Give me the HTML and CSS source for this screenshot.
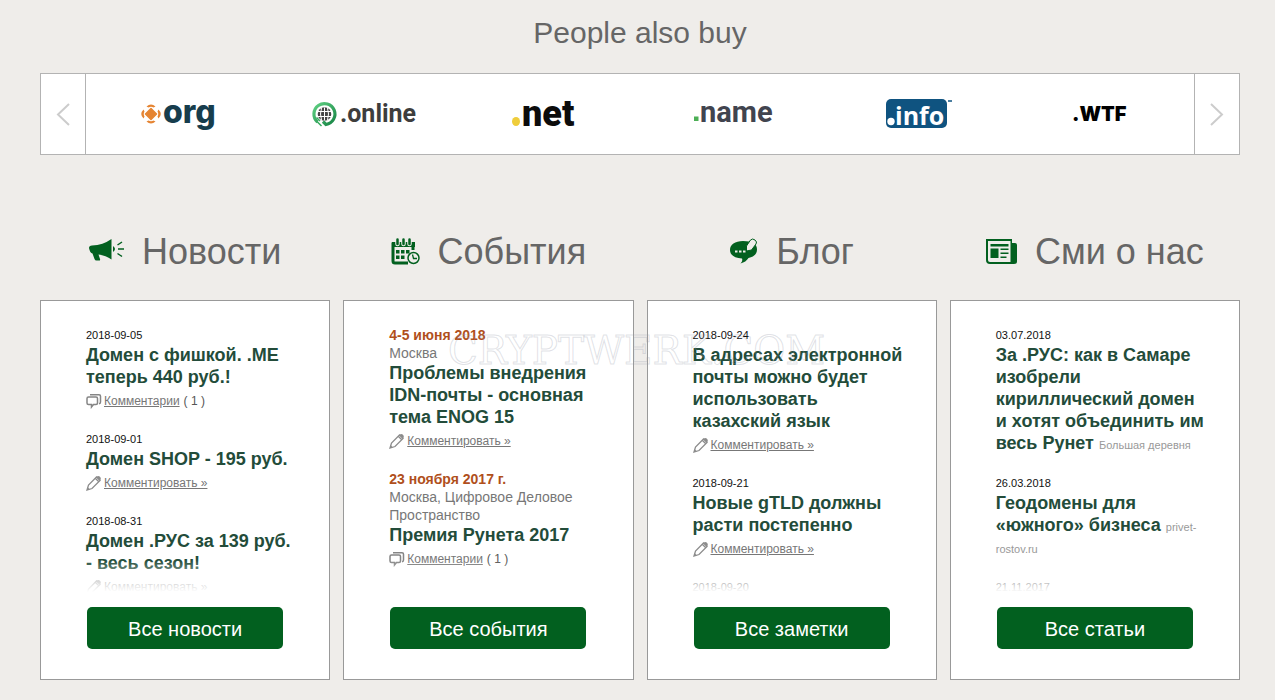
FILE: index.html
```html
<!DOCTYPE html>
<html lang="ru">
<head>
<meta charset="utf-8">
<title>People also buy</title>
<link rel="stylesheet" href="styles.css">
</head>
<body>
<svg class="sprite" aria-hidden="true">
  <symbol id="pencil" viewBox="0 0 16 16">
    <path d="M1 15 2.500 10 10.500 2 14 5.500 6 13.500Z M9.500 3.500 12.500 6.500" fill="none" stroke="#8c8c8c" stroke-width="1.300"/>
    <path d="M10.500 2Q12 .3 13.700 1.500 15.800 3.200 14 5.500ZM1 15l.8-2.700 2 2Z" fill="#8c8c8c"/>
  </symbol>
  <symbol id="bubbles" viewBox="0 0 16 16">
    <path d="M4 1.800H13q1.500 0 1.500 1.500V9q0 1.500-1.500 1.800" fill="none" stroke="#858585" stroke-width="1.500"/>
    <path d="M2.500 4H10q1.500 0 1.500 1.500V10q0 1.500-1.500 1.500H7.500L5.500 14V11.500H2.500Q1 11.500 1 10V5.500Q1 4 2.500 4Z" fill="#fff" stroke="#858585" stroke-width="1.500"/>
  </symbol>
</svg>

<main class="page">
  <section class="also-buy">
    <h2 class="also-buy-title">People also buy</h2>
    <div class="carousel">
      <button class="carousel-arrow" type="button" aria-label="Previous">
        <svg width="16" height="24" viewBox="0 0 16 24"><path d="M14 2 3 12.500 14 23" /></svg>
      </button>
      <div class="carousel-items">
        <a href="#" class="logo">
          <svg width="84" height="60" viewBox="0 -10 84 60">
            <g fill="#e58432">
              <path d="M11 13.500 16.500 19 11 24.500 5.500 19Z" stroke="#e58432" stroke-width="1.500" stroke-linejoin="round"/>
              <path d="M6.500 11.500Q11 7.500 15.500 11.500L13.500 12.500Q11 11 8.500 12.500ZM6.500 26.500Q11 30.500 15.500 26.500L13.500 25.500Q11 27 8.500 25.500ZM3.500 14.500Q-1 19 3.500 23.500L4.500 21.500Q3 19 4.500 16.500ZM18.500 14.500Q23 19 18.500 23.500L17.500 21.500Q19 19 17.500 16.500Z"/>
            </g>
            <text x="23" y="28" class="mark mark-org">org</text>
          </svg>
        </a>
        <a href="#" class="logo">
          <svg width="108" height="48" viewBox="0 -4 108 48">
            <defs><linearGradient id="ring" x1="0" y1="0" x2="1" y2="1"><stop offset="0" stop-color="#5fd183"/><stop offset="1" stop-color="#168344"/></linearGradient></defs>
            <path d="M5.500 27A10.500 10.500 0 1 1 14 29.500L11 26.500" fill="none" stroke="url(#ring)" stroke-width="3.200"/>
            <path d="M5 26.500 9.500 31M4.500 22.500 8 26" stroke="#36ab5f" stroke-width="1.500"/>
            <circle cx="12.500" cy="19" r="6.800" fill="#444"/>
            <path d="M6 16.500H19M6 21.500H19M12.500 12.500V25.500M9.500 13Q7.500 19 9.500 25M15.500 13Q17.500 19 15.500 25" fill="none" stroke="#fff" stroke-width="1"/>
            <text x="28" y="27" class="mark mark-online">.online</text>
          </svg>
        </a>
        <a href="#" class="logo logo-net">
          <svg width="68" height="60" viewBox="0 -10 68 60">
            <ellipse cx="5" cy="26.500" rx="4" ry="4.500" fill="#efcd3b"/>
            <text x="11" y="31" class="mark mark-net">net</text>
          </svg>
        </a>
        <a href="#" class="logo">
          <svg width="82" height="48" viewBox="0 -4 82 48">
            <path d="M1 21.500h4.500v4.500H1Z" fill="#4caf55"/>
            <text x="7" y="27" class="mark mark-name">name</text>
          </svg>
        </a>
        <a href="#" class="logo">
          <svg width="68" height="48" viewBox="0 -4 68 48">
            <rect x="2" y="4" width="61" height="29" rx="5" fill="#0f5380"/>
            <circle cx="7" cy="26.500" r="3.700" fill="#fff"/>
            <text x="11" y="30" class="mark mark-info">info</text>
            <path d="M64 6h4" stroke="#0f5380" stroke-width="1.500"/>
          </svg>
        </a>
        <a href="#" class="logo">
          <svg width="64" height="48" viewBox="0 -4 64 48">
            <text x="2" y="26" class="mark mark-wtf">.WTF</text>
          </svg>
        </a>
      </div>
      <button class="carousel-arrow" type="button" aria-label="Next">
        <svg width="16" height="24" viewBox="0 0 16 24"><path d="M2 2 13 12.500 2 23" /></svg>
      </button>
    </div>
  </section>

  <div class="columns">
    <section class="column">
      <h2 class="column-title">
        <svg width="36" height="28" viewBox="0 0 36 28">
          <path d="M0 10Q0 7.500 3 7.500 14 7 22.500 1V21.500Q17 17.500 9.500 16.500L11 21Q11.500 22.500 10 22.500H7.500Q6 22.500 5.500 21L3.500 15.500Q1 15 0 10ZM24 8Q28 11 24 14Z" fill="#02601f"/>
          <path d="M28.500 7 33 4M29 11H35M28.500 15.500 33 18.500" stroke="#02601f" stroke-width="1.500"/>
        </svg>
        Новости
      </h2>
      <div class="card">
        <div class="feed">
          <article class="entry">
            <time class="date">2018-09-05</time>
            <h3 class="headline">Домен с фишкой. .ME теперь 440 руб.!</h3>
            <p class="comments"><svg width="16" height="16"><use href="#bubbles"/></svg><a href="#">Комментарии</a> <span class="count">( 1 )</span></p>
          </article>
          <article class="entry">
            <time class="date">2018-09-01</time>
            <h3 class="headline">Домен SHOP - 195 руб.</h3>
            <p class="comments"><svg width="16" height="16"><use href="#pencil"/></svg><a href="#">Комментировать »</a></p>
          </article>
          <article class="entry">
            <time class="date">2018-08-31</time>
            <h3 class="headline">Домен .РУС за 139 руб. - весь сезон!</h3>
            <p class="comments"><svg width="16" height="16"><use href="#pencil"/></svg><a href="#">Комментировать »</a></p>
          </article>
        </div>
        <a href="#" class="more">Все новости</a>
      </div>
    </section>

    <section class="column">
      <h2 class="column-title">
        <svg width="30" height="28" viewBox="0 0 30 28">
          <path d="M2 4.500V23Q2 25 4 25H17M22 4.500V12" fill="none" stroke="#02601f" stroke-width="3"/>
          <path d="M1 4H24V9H1Z" fill="#02601f"/>
          <path d="M6.500 2V6M12.500 2V6M18.500 2V6" stroke="#efedea" stroke-width="4.500" stroke-linecap="round"/>
          <path d="M6.500 1.500V6M12.500 1.500V6M18.500 1.500V6" stroke="#02601f" stroke-width="2.500" stroke-linecap="round"/>
          <path d="M5 12h3.500v3.500H5ZM10 12h3.500v3.500H10ZM15 12h3.500v3.500H15ZM5 17.500h3.500V21H5ZM10 17.500h3.500V21H10Z" fill="#02601f"/>
          <circle cx="22.500" cy="20" r="5.500" fill="#efedea" stroke="#02601f" stroke-width="1.500"/>
          <path d="M21.500 16.500 22.500 20.500H26" fill="none" stroke="#02601f" stroke-width="1.300"/>
        </svg>
        События
      </h2>
      <div class="card">
        <div class="feed">
          <article class="entry">
            <time class="event-date">4-5 июня 2018</time>
            <p class="place">Москва</p>
            <h3 class="headline">Проблемы внедрения IDN-почты - основная тема ENOG 15</h3>
            <p class="comments"><svg width="16" height="16"><use href="#pencil"/></svg><a href="#">Комментировать »</a></p>
          </article>
          <article class="entry">
            <time class="event-date">23 ноября 2017 г.</time>
            <p class="place">Москва, Цифровое Деловое Пространство</p>
            <h3 class="headline">Премия Рунета 2017</h3>
            <p class="comments"><svg width="16" height="16"><use href="#bubbles"/></svg><a href="#">Комментарии</a> <span class="count">( 1 )</span></p>
          </article>
        </div>
        <a href="#" class="more">Все события</a>
      </div>
    </section>

    <section class="column">
      <h2 class="column-title">
        <svg width="30" height="28" viewBox="0 0 30 28">
          <path d="M14 3C6 3 1 6.500 1 12S6 20 13 20.500Q14 23 11.500 25.500 17 24 19.500 20 28 18 28 11.500 28 3 14 3Z" fill="#02601f"/>
          <path d="M17.500 13V8L21.500 2Q23.500 0 26 2T27 6L22.500 12Z" fill="#efedea" stroke="#02601f" stroke-width="1"/>
          <path d="M6 13.500h2.500M10 13.500h2.500M14 13.500h2.500" stroke="#efedea" stroke-width="2"/>
        </svg>
        Блог
      </h2>
      <div class="card">
        <div class="feed">
          <article class="entry">
            <time class="date">2018-09-24</time>
            <h3 class="headline">В адресах электронной почты можно будет использовать казахский язык</h3>
            <p class="comments"><svg width="16" height="16"><use href="#pencil"/></svg><a href="#">Комментировать »</a></p>
          </article>
          <article class="entry">
            <time class="date">2018-09-21</time>
            <h3 class="headline">Новые gTLD должны расти постепенно</h3>
            <p class="comments"><svg width="16" height="16"><use href="#pencil"/></svg><a href="#">Комментировать »</a></p>
          </article>
          <article class="entry">
            <time class="date">2018-09-20</time>
          </article>
        </div>
        <a href="#" class="more">Все заметки</a>
      </div>
    </section>

    <section class="column">
      <h2 class="column-title">
        <svg width="32" height="28" viewBox="0 0 32 28">
          <path d="M26 5H29Q31 5 31 7V23.500Q31 26 28 26H4Q0 26 0 22V1H26Z" fill="#02601f"/>
          <path d="M2 3H24.500V24H4Q2 24 2 22Z" fill="#efedea"/>
          <path d="M4.500 6H22.500V8.500H4.500ZM4.500 10.500H12.500V20H4.500ZM14.500 10.500h8v1.500h-8ZM14.500 14.500h8V16h-8ZM14.500 18.500h6V20h-6Z" fill="#02601f"/>
        </svg>
        Сми о нас
      </h2>
      <div class="card">
        <div class="feed">
          <article class="entry">
            <time class="date">03.07.2018</time>
            <h3 class="headline">За .РУС: как в Самаре изобрели кириллический домен и хотят объединить им весь Рунет <span class="source">Большая деревня</span></h3>
          </article>
          <article class="entry">
            <time class="date">26.03.2018</time>
            <h3 class="headline">Геодомены для «южного» бизнеса <span class="source">privet-rostov.ru</span></h3>
          </article>
          <article class="entry">
            <time class="date">21.11.2017</time>
          </article>
        </div>
        <a href="#" class="more">Все статьи</a>
      </div>
    </section>
    <div class="watermark">CRYPTWERK.COM</div>
  </div>
</main>
</body>
</html>
```

FILE: styles.css
```css
* {
  box-sizing: border-box;
}

body {
  margin: 0;
  background: #efedea;
  color: #222;
  font-family: "Liberation Sans", Arial, sans-serif;
}

h2, h3, p {
  margin: 0;
}

.sprite {
  display: none;
}

.page {
  padding: 13px 35px 20px 40px;
}

.also-buy-title {
  margin-bottom: 20px;
  color: #666;
  font-size: 30px;
  font-weight: 400;
  line-height: 40px;
  text-align: center;
}

.carousel {
  display: flex;
  height: 82px;
  border: 1px solid #b3b3b3;
  background: #fff;
}

.carousel-arrow {
  display: flex;
  flex: none;
  align-items: center;
  justify-content: center;
  width: 45px;
  padding: 0;
  border: 0;
  background: none;
}

.carousel-arrow:first-child {
  border-right: 1px solid #b3b3b3;
}

.carousel-arrow:last-child {
  border-left: 1px solid #b3b3b3;
}

.carousel-arrow path {
  fill: none;
  stroke: #ccc;
  stroke-width: 2;
}

.carousel-items {
  display: grid;
  flex: 1;
  grid-template-columns: repeat(6, 1fr);
  padding: 2px 0 0 4px;
}

.logo {
  display: flex;
  align-items: center;
  justify-content: center;
}

.logo-net {
  padding-right: 10px;
}

.mark {
  font-weight: 700;
}

.mark-org {
  fill: #173d4d;
  font-family: Inter, sans-serif;
  font-size: 32px;
  font-weight: 800;
}

.mark-online {
  fill: #3d3d3d;
  font-family: Roboto, sans-serif;
  font-size: 25px;
}

.mark-net {
  fill: #0c0c0c;
  font-family: Roboto, sans-serif;
  font-size: 36px;
  font-weight: 900;
}

.mark-name {
  fill: #41444f;
  font-family: Roboto, sans-serif;
  font-size: 29px;
}

.mark-info {
  fill: #fff;
  font-family: "Open Sans", sans-serif;
  font-size: 25px;
}

.mark-wtf {
  fill: #000;
  font-family: Inter, sans-serif;
  font-size: 20px;
  font-weight: 900;
}

.columns {
  position: relative;
  display: grid;
  grid-template-columns: repeat(4, 1fr);
  gap: 13px;
  margin-top: 73px;
}

.column-title {
  display: flex;
  align-items: center;
  justify-content: center;
  gap: 17px;
  height: 48px;
  margin-bottom: 24px;
  color: #666;
  font-size: 36px;
  font-weight: 400;
}

.card {
  display: flex;
  flex-direction: column;
  align-items: center;
  padding: 25px 0 30px;
  border: 1px solid #999;
  background: #fff;
}

.feed {
  position: relative;
  width: 100%;
  height: 266px;
  padding: 0 30px 0 45px;
  overflow: hidden;
}

.feed::after {
  content: "";
  position: absolute;
  right: 0;
  bottom: 0;
  left: 0;
  height: 32px;
  background: linear-gradient(rgba(255, 255, 255, 0), #fff);
}

.entry {
  margin-bottom: 20px;
}

.date,
.event-date {
  display: block;
  color: #111;
  font-size: 11px;
  line-height: 18px;
}

.event-date {
  color: #b04f1c;
  font-size: 14px;
  font-weight: 700;
}

.place {
  color: #777;
  font-size: 14px;
  line-height: 18px;
}

.headline {
  color: #234c3a;
  font-size: 18px;
  font-weight: 700;
  line-height: 22px;
}

.source {
  color: #999;
  font-size: 11px;
  font-weight: 400;
  line-height: 11px;
}

.comments {
  display: flex;
  align-items: center;
  gap: 2px;
  margin-top: 4px;
  color: #555;
  font-size: 12px;
  line-height: 18px;
}

.comments a {
  color: #777;
}

.count {
  padding-left: 2px;
}

.more {
  width: 196px;
  height: 42px;
  margin-top: 15px;
  border-radius: 5px;
  background: #02601f;
  color: #fff;
  font-size: 20px;
  line-height: 44px;
  text-align: center;
  text-decoration: none;
}

.watermark {
  position: absolute;
  top: 98px;
  left: 408px;
  color: transparent;
  font-family: "DejaVu Serif", serif;
  font-size: 39px;
  line-height: 50px;
  pointer-events: none;
  -webkit-text-stroke: 1px rgba(150, 155, 170, 0.3);
}
```
